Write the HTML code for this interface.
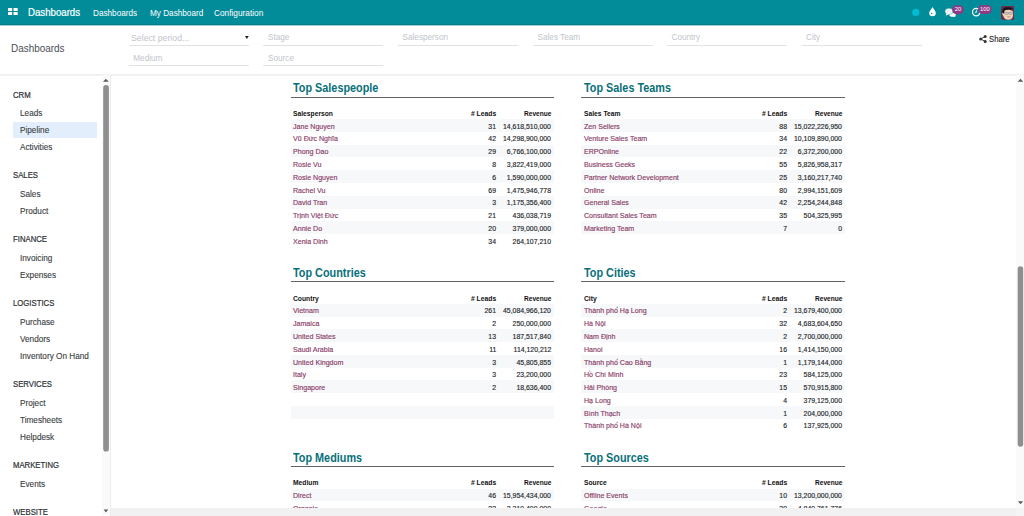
<!DOCTYPE html>
<html><head><meta charset="utf-8"><title>Dashboards</title>
<style>
html,body{margin:0;padding:0;}
body{width:1024px;height:516px;overflow:hidden;position:relative;background:#fff;font-family:"Liberation Sans",sans-serif;}
.t{position:absolute;white-space:nowrap;line-height:1;}
.r{position:absolute;}
.badge{position:absolute;height:9px;border-radius:4.5px;background:#8f3a86;color:#fff;font-size:6.4px;line-height:8.6px;text-align:center;font-family:"Liberation Sans",sans-serif;}
</style></head><body>
<div class="r" style="left:0.00px;top:0.00px;width:1024.00px;height:24.00px;background:#028b99;"></div>
<div class="r" style="left:0.00px;top:24.00px;width:1024.00px;height:1.00px;background:#037d88;"></div>
<div class="r" style="left:0.00px;top:25.00px;width:1024.00px;height:1.00px;background:#9fd0d5;"></div>
<svg class="r" style="left:0;top:0" width="24" height="24" viewBox="0 0 24 24"><g fill="#fff"><rect x="8" y="8" width="4.2" height="3.1" rx="0.5"/><rect x="13.5" y="8" width="4.2" height="3.1" rx="0.5"/><rect x="8" y="12" width="4.2" height="3.1" rx="0.5"/><rect x="13.5" y="12" width="4.2" height="3.1" rx="0.5"/></g></svg>
<div class="t " style="left:28.10px;top:8.00px;font-size:10.00px;color:#fff;font-weight:normal;transform:scaleX(0.965);transform-origin:left center;-webkit-text-stroke:0.2px #fff;">Dashboards</div>
<div class="t " style="left:93.40px;top:9.00px;font-size:9.00px;color:#fff;font-weight:normal;transform:scaleX(0.910);transform-origin:left center;">Dashboards</div>
<div class="t " style="left:149.50px;top:9.00px;font-size:9.00px;color:#fff;font-weight:normal;transform:scaleX(0.910);transform-origin:left center;">My Dashboard</div>
<div class="t " style="left:214.20px;top:9.00px;font-size:9.00px;color:#fff;font-weight:normal;transform:scaleX(0.920);transform-origin:left center;">Configuration</div>
<svg class="r" style="left:900px;top:0" width="40" height="24" viewBox="900 0 40 24"><circle cx="915.8" cy="12.4" r="3.6" fill="#00bcd2"/><path d="M932.5 7 C933.4 9 935.8 11.2 935.8 12.9 A3.3 3.3 0 0 1 929.2 12.9 C929.2 11.2 931.6 9 932.5 7Z" fill="#fff"/><circle cx="931.7" cy="13.6" r="0.75" fill="#028b99"/></svg>
<svg class="r" style="left:940px;top:0" width="56" height="24" viewBox="940 0 56 24">
<ellipse cx="952.6" cy="14.7" rx="3.2" ry="2" fill="#fff"/><path d="M954.2 15.8 L955.9 16.9 L952.6 16.4Z" fill="#fff"/>
<ellipse cx="949" cy="11.4" rx="4" ry="3.1" fill="#fff" stroke="#028b99" stroke-width="0.4"/><path d="M946.4 13.6 L945.9 15.7 L948.6 14.3Z" fill="#fff"/>
<ellipse cx="949" cy="11.4" rx="2.8" ry="1.9" fill="#e6f2f3"/>
<rect x="952.2" y="5.2" width="11.5" height="9" rx="4.5" fill="#8d3a87"/>
<text x="957.95" y="11.1" font-size="5.8" text-anchor="middle" fill="#fff" font-family="Liberation Sans">20</text>
<circle cx="976.2" cy="12.1" r="3.7" fill="none" stroke="#fff" stroke-width="1.2"/><path d="M976.4 9.8 V12.4 H974.9" fill="none" stroke="#fff" stroke-width="0.8"/>
<rect x="978.1" y="5" width="13.6" height="9" rx="4.5" fill="#8d3a87"/>
<text x="984.9" y="10.9" font-size="5.8" text-anchor="middle" fill="#fff" font-family="Liberation Sans">100</text>
</svg>
<svg class="r" style="left:1000.6px;top:5.9px" width="13.6" height="13.8" viewBox="0 0 13.6 13.8"><rect x="0" y="0" width="13.6" height="13.8" rx="2" fill="#6a2b4e"/><path d="M2 6 C2 2.8 12.2 2.8 12.2 6.5 L12 10 C11.5 12.8 9.5 13.8 7.4 13.8 C5 13.8 3 12.6 2.4 10.2 L1.4 8.6 C1 7.6 1.4 6.6 2 6.6Z" fill="#f4d2b6"/><path d="M1.6 7 C1 3.6 2.6 1.2 6 1.3 C9 1.2 11.6 1.8 12 2.6 C11.4 3.4 10.4 3.6 9 3.6 C7 3.6 5 3.8 3.6 4.6 L3 7.6Z" fill="#151515"/><rect x="3.6" y="6.3" width="3.8" height="2" rx="0.7" fill="#cfcfcf" stroke="#777" stroke-width="0.5"/><rect x="8" y="6.3" width="3.6" height="2" rx="0.7" fill="#cfcfcf" stroke="#777" stroke-width="0.5"/><path d="M6.4 10.6 Q8 11.4 9.4 10.6" stroke="#b07070" stroke-width="0.7" fill="none"/></svg>
<div class="r" style="left:0.00px;top:74.00px;width:1024.00px;height:2.00px;background:#f0f1f3;"></div>
<div class="t " style="left:11.40px;top:43.80px;font-size:10.40px;color:#4a4f54;font-weight:normal;transform:scaleX(0.955);transform-origin:left center;">Dashboards</div>
<div class="r" style="left:128.50px;top:45.00px;width:120.10px;height:1.30px;background:#e2e2e2;"></div>
<div class="t " style="left:130.90px;top:33.85px;font-size:9.30px;color:#bfc5cc;font-weight:normal;transform:scaleX(0.940);transform-origin:left center;">Select period...</div>
<svg class="r" style="left:240px;top:30px" width="12" height="12" viewBox="240 30 12 12"><path d="M244.9 36.1 L248.8 36.1 L246.85 38.9Z" fill="#222"/></svg>
<div class="r" style="left:128.50px;top:65.10px;width:120.10px;height:1.30px;background:#e2e2e2;"></div>
<div class="t " style="left:133.30px;top:54.90px;font-size:8.20px;color:#bfc5cc;font-weight:normal;">Medium</div>
<div class="r" style="left:263.30px;top:44.50px;width:119.80px;height:1.30px;background:#e2e2e2;"></div>
<div class="t " style="left:268.00px;top:33.90px;font-size:8.20px;color:#bfc5cc;font-weight:normal;">Stage</div>
<div class="r" style="left:263.30px;top:64.80px;width:119.80px;height:1.30px;background:#e2e2e2;"></div>
<div class="t " style="left:268.00px;top:54.90px;font-size:8.20px;color:#bfc5cc;font-weight:normal;">Source</div>
<div class="r" style="left:398.00px;top:44.50px;width:120.00px;height:1.30px;background:#e2e2e2;"></div>
<div class="t " style="left:402.50px;top:33.90px;font-size:8.20px;color:#bfc5cc;font-weight:normal;">Salesperson</div>
<div class="r" style="left:533.00px;top:44.50px;width:120.00px;height:1.30px;background:#e2e2e2;"></div>
<div class="t " style="left:537.50px;top:33.90px;font-size:8.20px;color:#bfc5cc;font-weight:normal;">Sales Team</div>
<div class="r" style="left:667.00px;top:44.50px;width:120.00px;height:1.30px;background:#e2e2e2;"></div>
<div class="t " style="left:671.50px;top:33.90px;font-size:8.20px;color:#bfc5cc;font-weight:normal;">Country</div>
<div class="r" style="left:801.60px;top:44.50px;width:120.00px;height:1.30px;background:#e2e2e2;"></div>
<div class="t " style="left:806.00px;top:33.90px;font-size:8.20px;color:#bfc5cc;font-weight:normal;">City</div>
<svg class="r" style="left:978.6px;top:35px" width="8" height="8" viewBox="0 0 8 8"><circle cx="6.2" cy="1.6" r="1.5" fill="#333"/><circle cx="1.7" cy="4" r="1.5" fill="#333"/><circle cx="6.2" cy="6.4" r="1.5" fill="#333"/><path d="M6.2 1.6 L1.7 4 L6.2 6.4" stroke="#333" stroke-width="0.9" fill="none"/></svg>
<div class="t " style="left:988.80px;top:35.30px;font-size:8.40px;color:#2a2a2a;font-weight:normal;transform:scaleX(0.920);transform-origin:left center;-webkit-text-stroke:0.15px currentColor;">Share</div>
<div class="r" style="left:13.20px;top:121.90px;width:84.20px;height:16.50px;background:#e3eefc;"></div>
<div class="t " style="left:13.20px;top:91.00px;font-size:9.00px;color:#2f3337;font-weight:normal;transform:scaleX(0.860);transform-origin:left center;-webkit-text-stroke:0.22px currentColor;">CRM</div>
<div class="t " style="left:20.20px;top:109.20px;font-size:8.60px;color:#3a3e42;font-weight:normal;transform:scaleX(0.955);transform-origin:left center;-webkit-text-stroke:0.12px currentColor;">Leads</div>
<div class="t " style="left:20.20px;top:126.20px;font-size:8.60px;color:#3a3e42;font-weight:normal;transform:scaleX(0.955);transform-origin:left center;-webkit-text-stroke:0.12px currentColor;">Pipeline</div>
<div class="t " style="left:20.20px;top:143.20px;font-size:8.60px;color:#3a3e42;font-weight:normal;transform:scaleX(0.955);transform-origin:left center;-webkit-text-stroke:0.12px currentColor;">Activities</div>
<div class="t " style="left:13.20px;top:171.00px;font-size:9.00px;color:#2f3337;font-weight:normal;transform:scaleX(0.860);transform-origin:left center;-webkit-text-stroke:0.22px currentColor;">SALES</div>
<div class="t " style="left:20.20px;top:190.20px;font-size:8.60px;color:#3a3e42;font-weight:normal;transform:scaleX(0.955);transform-origin:left center;-webkit-text-stroke:0.12px currentColor;">Sales</div>
<div class="t " style="left:20.20px;top:207.20px;font-size:8.60px;color:#3a3e42;font-weight:normal;transform:scaleX(0.955);transform-origin:left center;-webkit-text-stroke:0.12px currentColor;">Product</div>
<div class="t " style="left:13.20px;top:235.00px;font-size:9.00px;color:#2f3337;font-weight:normal;transform:scaleX(0.860);transform-origin:left center;-webkit-text-stroke:0.22px currentColor;">FINANCE</div>
<div class="t " style="left:20.20px;top:254.20px;font-size:8.60px;color:#3a3e42;font-weight:normal;transform:scaleX(0.955);transform-origin:left center;-webkit-text-stroke:0.12px currentColor;">Invoicing</div>
<div class="t " style="left:20.20px;top:271.20px;font-size:8.60px;color:#3a3e42;font-weight:normal;transform:scaleX(0.955);transform-origin:left center;-webkit-text-stroke:0.12px currentColor;">Expenses</div>
<div class="t " style="left:13.20px;top:299.00px;font-size:9.00px;color:#2f3337;font-weight:normal;transform:scaleX(0.860);transform-origin:left center;-webkit-text-stroke:0.22px currentColor;">LOGISTICS</div>
<div class="t " style="left:20.20px;top:318.20px;font-size:8.60px;color:#3a3e42;font-weight:normal;transform:scaleX(0.955);transform-origin:left center;-webkit-text-stroke:0.12px currentColor;">Purchase</div>
<div class="t " style="left:20.20px;top:335.20px;font-size:8.60px;color:#3a3e42;font-weight:normal;transform:scaleX(0.955);transform-origin:left center;-webkit-text-stroke:0.12px currentColor;">Vendors</div>
<div class="t " style="left:20.20px;top:352.20px;font-size:8.60px;color:#3a3e42;font-weight:normal;transform:scaleX(0.955);transform-origin:left center;-webkit-text-stroke:0.12px currentColor;">Inventory On Hand</div>
<div class="t " style="left:13.20px;top:380.00px;font-size:9.00px;color:#2f3337;font-weight:normal;transform:scaleX(0.860);transform-origin:left center;-webkit-text-stroke:0.22px currentColor;">SERVICES</div>
<div class="t " style="left:20.20px;top:399.20px;font-size:8.60px;color:#3a3e42;font-weight:normal;transform:scaleX(0.955);transform-origin:left center;-webkit-text-stroke:0.12px currentColor;">Project</div>
<div class="t " style="left:20.20px;top:416.20px;font-size:8.60px;color:#3a3e42;font-weight:normal;transform:scaleX(0.955);transform-origin:left center;-webkit-text-stroke:0.12px currentColor;">Timesheets</div>
<div class="t " style="left:20.20px;top:433.20px;font-size:8.60px;color:#3a3e42;font-weight:normal;transform:scaleX(0.955);transform-origin:left center;-webkit-text-stroke:0.12px currentColor;">Helpdesk</div>
<div class="t " style="left:13.20px;top:461.00px;font-size:9.00px;color:#2f3337;font-weight:normal;transform:scaleX(0.860);transform-origin:left center;-webkit-text-stroke:0.22px currentColor;">MARKETING</div>
<div class="t " style="left:20.20px;top:480.20px;font-size:8.60px;color:#3a3e42;font-weight:normal;transform:scaleX(0.955);transform-origin:left center;-webkit-text-stroke:0.12px currentColor;">Events</div>
<div class="t " style="left:13.20px;top:508.00px;font-size:9.00px;color:#2f3337;font-weight:normal;transform:scaleX(0.860);transform-origin:left center;-webkit-text-stroke:0.22px currentColor;">WEBSITE</div>
<div class="r" style="left:102.00px;top:75.00px;width:8.00px;height:441.00px;background:#fafafa;"></div>
<div class="r" style="left:110.00px;top:75.00px;width:1.00px;height:441.00px;background:#ebecee;"></div>
<svg class="r" style="left:100px;top:75px" width="12" height="441" viewBox="100 75 12 441"><rect x="103.2" y="85.1" width="5.7" height="366.5" rx="2.85" fill="#8f8f8f"/><path d="M103 81.7 L108.8 81.7 L105.9 78.7Z" fill="#5a5a5a"/><path d="M103.6 509.6 L108.3 509.6 L105.95 512.4Z" fill="#5a5a5a"/></svg>
<div class="r" style="left:1016.00px;top:75.00px;width:8.00px;height:433.00px;background:#fafafa;"></div>
<svg class="r" style="left:1012px;top:75px" width="12" height="441" viewBox="1012 75 12 441"><rect x="1017.7" y="266.2" width="5.5" height="180.5" rx="2.75" fill="#8f8f8f"/><path d="M1017.7 81.8 L1023.2 81.8 L1020.45 78.7Z" fill="#5a5a5a"/><path d="M1017.9 501.3 L1023.1 501.3 L1020.5 504.3Z" fill="#5a5a5a"/></svg>
<div class="r" style="left:111.00px;top:508.00px;width:905.00px;height:8.00px;background:#f1f1f1;"></div>
<div class="r" style="left:1016.00px;top:508.00px;width:8.00px;height:8.00px;background:#f4f4f4;"></div>
<div class="t " style="left:293.00px;top:82.40px;font-size:12.20px;color:#08707a;font-weight:bold;transform:scaleX(0.890);transform-origin:left center;">Top Salespeople</div>
<div class="r" style="left:291.00px;top:96.50px;width:262.80px;height:1.30px;background:#5f6266;"></div>
<div class="t " style="left:293.00px;top:110.35px;font-size:7.30px;color:#111;font-weight:bold;transform:scaleX(0.920);transform-origin:left center;">Salesperson</div>
<div class="t " style="right:528.00px;top:110.35px;font-size:7.30px;color:#111;font-weight:bold;transform:scaleX(0.930);transform-origin:right center;"># Leads</div>
<div class="t " style="right:472.70px;top:110.35px;font-size:7.30px;color:#111;font-weight:bold;transform:scaleX(0.900);transform-origin:right center;">Revenue</div>
<div class="r" style="left:291.00px;top:119.10px;width:262.80px;height:12.78px;background:#f7f8f9;"></div>
<div class="t " style="left:293.00px;top:123.40px;font-size:7.20px;color:#8a3c68;font-weight:normal;transform:scaleX(0.985);transform-origin:left center;-webkit-text-stroke:0.15px currentColor;">Jane Nguyen</div>
<div class="t " style="right:528.00px;top:123.40px;font-size:7.20px;color:#212529;font-weight:normal;transform:scaleX(0.960);transform-origin:right center;-webkit-text-stroke:0.15px currentColor;">31</div>
<div class="t " style="right:472.70px;top:123.40px;font-size:7.20px;color:#212529;font-weight:normal;transform:scaleX(0.960);transform-origin:right center;-webkit-text-stroke:0.15px currentColor;">14,618,510,000</div>
<div class="t " style="left:293.00px;top:135.40px;font-size:7.20px;color:#8a3c68;font-weight:normal;transform:scaleX(0.985);transform-origin:left center;-webkit-text-stroke:0.15px currentColor;">Vũ Đức Nghĩa</div>
<div class="t " style="right:528.00px;top:135.40px;font-size:7.20px;color:#212529;font-weight:normal;transform:scaleX(0.960);transform-origin:right center;-webkit-text-stroke:0.15px currentColor;">42</div>
<div class="t " style="right:472.70px;top:135.40px;font-size:7.20px;color:#212529;font-weight:normal;transform:scaleX(0.960);transform-origin:right center;-webkit-text-stroke:0.15px currentColor;">14,298,900,000</div>
<div class="r" style="left:291.00px;top:144.66px;width:262.80px;height:12.78px;background:#f7f8f9;"></div>
<div class="t " style="left:293.00px;top:148.40px;font-size:7.20px;color:#8a3c68;font-weight:normal;transform:scaleX(0.985);transform-origin:left center;-webkit-text-stroke:0.15px currentColor;">Phong Dao</div>
<div class="t " style="right:528.00px;top:148.40px;font-size:7.20px;color:#212529;font-weight:normal;transform:scaleX(0.960);transform-origin:right center;-webkit-text-stroke:0.15px currentColor;">29</div>
<div class="t " style="right:472.70px;top:148.40px;font-size:7.20px;color:#212529;font-weight:normal;transform:scaleX(0.960);transform-origin:right center;-webkit-text-stroke:0.15px currentColor;">6,766,100,000</div>
<div class="t " style="left:293.00px;top:161.40px;font-size:7.20px;color:#8a3c68;font-weight:normal;transform:scaleX(0.985);transform-origin:left center;-webkit-text-stroke:0.15px currentColor;">Rosie Vu</div>
<div class="t " style="right:528.00px;top:161.40px;font-size:7.20px;color:#212529;font-weight:normal;transform:scaleX(0.960);transform-origin:right center;-webkit-text-stroke:0.15px currentColor;">8</div>
<div class="t " style="right:472.70px;top:161.40px;font-size:7.20px;color:#212529;font-weight:normal;transform:scaleX(0.960);transform-origin:right center;-webkit-text-stroke:0.15px currentColor;">3,822,419,000</div>
<div class="r" style="left:291.00px;top:170.22px;width:262.80px;height:12.78px;background:#f7f8f9;"></div>
<div class="t " style="left:293.00px;top:174.40px;font-size:7.20px;color:#8a3c68;font-weight:normal;transform:scaleX(0.985);transform-origin:left center;-webkit-text-stroke:0.15px currentColor;">Rosie Nguyen</div>
<div class="t " style="right:528.00px;top:174.40px;font-size:7.20px;color:#212529;font-weight:normal;transform:scaleX(0.960);transform-origin:right center;-webkit-text-stroke:0.15px currentColor;">6</div>
<div class="t " style="right:472.70px;top:174.40px;font-size:7.20px;color:#212529;font-weight:normal;transform:scaleX(0.960);transform-origin:right center;-webkit-text-stroke:0.15px currentColor;">1,590,000,000</div>
<div class="t " style="left:293.00px;top:187.40px;font-size:7.20px;color:#8a3c68;font-weight:normal;transform:scaleX(0.985);transform-origin:left center;-webkit-text-stroke:0.15px currentColor;">Rachel Vu</div>
<div class="t " style="right:528.00px;top:187.40px;font-size:7.20px;color:#212529;font-weight:normal;transform:scaleX(0.960);transform-origin:right center;-webkit-text-stroke:0.15px currentColor;">69</div>
<div class="t " style="right:472.70px;top:187.40px;font-size:7.20px;color:#212529;font-weight:normal;transform:scaleX(0.960);transform-origin:right center;-webkit-text-stroke:0.15px currentColor;">1,475,946,778</div>
<div class="r" style="left:291.00px;top:195.78px;width:262.80px;height:12.78px;background:#f7f8f9;"></div>
<div class="t " style="left:293.00px;top:199.40px;font-size:7.20px;color:#8a3c68;font-weight:normal;transform:scaleX(0.985);transform-origin:left center;-webkit-text-stroke:0.15px currentColor;">David Tran</div>
<div class="t " style="right:528.00px;top:199.40px;font-size:7.20px;color:#212529;font-weight:normal;transform:scaleX(0.960);transform-origin:right center;-webkit-text-stroke:0.15px currentColor;">3</div>
<div class="t " style="right:472.70px;top:199.40px;font-size:7.20px;color:#212529;font-weight:normal;transform:scaleX(0.960);transform-origin:right center;-webkit-text-stroke:0.15px currentColor;">1,175,356,400</div>
<div class="t " style="left:293.00px;top:212.40px;font-size:7.20px;color:#8a3c68;font-weight:normal;transform:scaleX(0.985);transform-origin:left center;-webkit-text-stroke:0.15px currentColor;">Trịnh Việt Đức</div>
<div class="t " style="right:528.00px;top:212.40px;font-size:7.20px;color:#212529;font-weight:normal;transform:scaleX(0.960);transform-origin:right center;-webkit-text-stroke:0.15px currentColor;">21</div>
<div class="t " style="right:472.70px;top:212.40px;font-size:7.20px;color:#212529;font-weight:normal;transform:scaleX(0.960);transform-origin:right center;-webkit-text-stroke:0.15px currentColor;">436,038,719</div>
<div class="r" style="left:291.00px;top:221.34px;width:262.80px;height:12.78px;background:#f7f8f9;"></div>
<div class="t " style="left:293.00px;top:225.40px;font-size:7.20px;color:#8a3c68;font-weight:normal;transform:scaleX(0.985);transform-origin:left center;-webkit-text-stroke:0.15px currentColor;">Annie Do</div>
<div class="t " style="right:528.00px;top:225.40px;font-size:7.20px;color:#212529;font-weight:normal;transform:scaleX(0.960);transform-origin:right center;-webkit-text-stroke:0.15px currentColor;">20</div>
<div class="t " style="right:472.70px;top:225.40px;font-size:7.20px;color:#212529;font-weight:normal;transform:scaleX(0.960);transform-origin:right center;-webkit-text-stroke:0.15px currentColor;">379,000,000</div>
<div class="t " style="left:293.00px;top:238.40px;font-size:7.20px;color:#8a3c68;font-weight:normal;transform:scaleX(0.985);transform-origin:left center;-webkit-text-stroke:0.15px currentColor;">Xenia Dinh</div>
<div class="t " style="right:528.00px;top:238.40px;font-size:7.20px;color:#212529;font-weight:normal;transform:scaleX(0.960);transform-origin:right center;-webkit-text-stroke:0.15px currentColor;">34</div>
<div class="t " style="right:472.70px;top:238.40px;font-size:7.20px;color:#212529;font-weight:normal;transform:scaleX(0.960);transform-origin:right center;-webkit-text-stroke:0.15px currentColor;">264,107,210</div>
<div class="t " style="left:583.50px;top:82.40px;font-size:12.20px;color:#08707a;font-weight:bold;transform:scaleX(0.890);transform-origin:left center;">Top Sales Teams</div>
<div class="r" style="left:581.20px;top:96.50px;width:263.80px;height:1.30px;background:#5f6266;"></div>
<div class="t " style="left:583.50px;top:110.35px;font-size:7.30px;color:#111;font-weight:bold;transform:scaleX(0.920);transform-origin:left center;">Sales Team</div>
<div class="t " style="right:236.80px;top:110.35px;font-size:7.30px;color:#111;font-weight:bold;transform:scaleX(0.930);transform-origin:right center;"># Leads</div>
<div class="t " style="right:181.80px;top:110.35px;font-size:7.30px;color:#111;font-weight:bold;transform:scaleX(0.900);transform-origin:right center;">Revenue</div>
<div class="r" style="left:581.20px;top:119.10px;width:263.80px;height:12.78px;background:#f7f8f9;"></div>
<div class="t " style="left:583.50px;top:123.40px;font-size:7.20px;color:#8a3c68;font-weight:normal;transform:scaleX(0.985);transform-origin:left center;-webkit-text-stroke:0.15px currentColor;">Zen Sellers</div>
<div class="t " style="right:236.80px;top:123.40px;font-size:7.20px;color:#212529;font-weight:normal;transform:scaleX(0.960);transform-origin:right center;-webkit-text-stroke:0.15px currentColor;">88</div>
<div class="t " style="right:181.80px;top:123.40px;font-size:7.20px;color:#212529;font-weight:normal;transform:scaleX(0.960);transform-origin:right center;-webkit-text-stroke:0.15px currentColor;">15,022,226,950</div>
<div class="t " style="left:583.50px;top:135.40px;font-size:7.20px;color:#8a3c68;font-weight:normal;transform:scaleX(0.985);transform-origin:left center;-webkit-text-stroke:0.15px currentColor;">Venture Sales Team</div>
<div class="t " style="right:236.80px;top:135.40px;font-size:7.20px;color:#212529;font-weight:normal;transform:scaleX(0.960);transform-origin:right center;-webkit-text-stroke:0.15px currentColor;">34</div>
<div class="t " style="right:181.80px;top:135.40px;font-size:7.20px;color:#212529;font-weight:normal;transform:scaleX(0.960);transform-origin:right center;-webkit-text-stroke:0.15px currentColor;">10,109,890,000</div>
<div class="r" style="left:581.20px;top:144.66px;width:263.80px;height:12.78px;background:#f7f8f9;"></div>
<div class="t " style="left:583.50px;top:148.40px;font-size:7.20px;color:#8a3c68;font-weight:normal;transform:scaleX(0.985);transform-origin:left center;-webkit-text-stroke:0.15px currentColor;">ERPOnline</div>
<div class="t " style="right:236.80px;top:148.40px;font-size:7.20px;color:#212529;font-weight:normal;transform:scaleX(0.960);transform-origin:right center;-webkit-text-stroke:0.15px currentColor;">22</div>
<div class="t " style="right:181.80px;top:148.40px;font-size:7.20px;color:#212529;font-weight:normal;transform:scaleX(0.960);transform-origin:right center;-webkit-text-stroke:0.15px currentColor;">6,372,200,000</div>
<div class="t " style="left:583.50px;top:161.40px;font-size:7.20px;color:#8a3c68;font-weight:normal;transform:scaleX(0.985);transform-origin:left center;-webkit-text-stroke:0.15px currentColor;">Business Geeks</div>
<div class="t " style="right:236.80px;top:161.40px;font-size:7.20px;color:#212529;font-weight:normal;transform:scaleX(0.960);transform-origin:right center;-webkit-text-stroke:0.15px currentColor;">55</div>
<div class="t " style="right:181.80px;top:161.40px;font-size:7.20px;color:#212529;font-weight:normal;transform:scaleX(0.960);transform-origin:right center;-webkit-text-stroke:0.15px currentColor;">5,826,958,317</div>
<div class="r" style="left:581.20px;top:170.22px;width:263.80px;height:12.78px;background:#f7f8f9;"></div>
<div class="t " style="left:583.50px;top:174.40px;font-size:7.20px;color:#8a3c68;font-weight:normal;transform:scaleX(0.985);transform-origin:left center;-webkit-text-stroke:0.15px currentColor;">Partner Network Development</div>
<div class="t " style="right:236.80px;top:174.40px;font-size:7.20px;color:#212529;font-weight:normal;transform:scaleX(0.960);transform-origin:right center;-webkit-text-stroke:0.15px currentColor;">25</div>
<div class="t " style="right:181.80px;top:174.40px;font-size:7.20px;color:#212529;font-weight:normal;transform:scaleX(0.960);transform-origin:right center;-webkit-text-stroke:0.15px currentColor;">3,160,217,740</div>
<div class="t " style="left:583.50px;top:187.40px;font-size:7.20px;color:#8a3c68;font-weight:normal;transform:scaleX(0.985);transform-origin:left center;-webkit-text-stroke:0.15px currentColor;">Online</div>
<div class="t " style="right:236.80px;top:187.40px;font-size:7.20px;color:#212529;font-weight:normal;transform:scaleX(0.960);transform-origin:right center;-webkit-text-stroke:0.15px currentColor;">80</div>
<div class="t " style="right:181.80px;top:187.40px;font-size:7.20px;color:#212529;font-weight:normal;transform:scaleX(0.960);transform-origin:right center;-webkit-text-stroke:0.15px currentColor;">2,994,151,609</div>
<div class="r" style="left:581.20px;top:195.78px;width:263.80px;height:12.78px;background:#f7f8f9;"></div>
<div class="t " style="left:583.50px;top:199.40px;font-size:7.20px;color:#8a3c68;font-weight:normal;transform:scaleX(0.985);transform-origin:left center;-webkit-text-stroke:0.15px currentColor;">General Sales</div>
<div class="t " style="right:236.80px;top:199.40px;font-size:7.20px;color:#212529;font-weight:normal;transform:scaleX(0.960);transform-origin:right center;-webkit-text-stroke:0.15px currentColor;">42</div>
<div class="t " style="right:181.80px;top:199.40px;font-size:7.20px;color:#212529;font-weight:normal;transform:scaleX(0.960);transform-origin:right center;-webkit-text-stroke:0.15px currentColor;">2,254,244,848</div>
<div class="t " style="left:583.50px;top:212.40px;font-size:7.20px;color:#8a3c68;font-weight:normal;transform:scaleX(0.985);transform-origin:left center;-webkit-text-stroke:0.15px currentColor;">Consultant Sales Team</div>
<div class="t " style="right:236.80px;top:212.40px;font-size:7.20px;color:#212529;font-weight:normal;transform:scaleX(0.960);transform-origin:right center;-webkit-text-stroke:0.15px currentColor;">35</div>
<div class="t " style="right:181.80px;top:212.40px;font-size:7.20px;color:#212529;font-weight:normal;transform:scaleX(0.960);transform-origin:right center;-webkit-text-stroke:0.15px currentColor;">504,325,995</div>
<div class="r" style="left:581.20px;top:221.34px;width:263.80px;height:12.78px;background:#f7f8f9;"></div>
<div class="t " style="left:583.50px;top:225.40px;font-size:7.20px;color:#8a3c68;font-weight:normal;transform:scaleX(0.985);transform-origin:left center;-webkit-text-stroke:0.15px currentColor;">Marketing Team</div>
<div class="t " style="right:236.80px;top:225.40px;font-size:7.20px;color:#212529;font-weight:normal;transform:scaleX(0.960);transform-origin:right center;-webkit-text-stroke:0.15px currentColor;">7</div>
<div class="t " style="right:181.80px;top:225.40px;font-size:7.20px;color:#212529;font-weight:normal;transform:scaleX(0.960);transform-origin:right center;-webkit-text-stroke:0.15px currentColor;">0</div>
<div class="t " style="left:293.00px;top:267.40px;font-size:12.20px;color:#08707a;font-weight:bold;transform:scaleX(0.890);transform-origin:left center;">Top Countries</div>
<div class="r" style="left:291.00px;top:281.20px;width:262.80px;height:1.30px;background:#5f6266;"></div>
<div class="t " style="left:293.00px;top:295.35px;font-size:7.30px;color:#111;font-weight:bold;transform:scaleX(0.920);transform-origin:left center;">Country</div>
<div class="t " style="right:528.00px;top:295.35px;font-size:7.30px;color:#111;font-weight:bold;transform:scaleX(0.930);transform-origin:right center;"># Leads</div>
<div class="t " style="right:472.70px;top:295.35px;font-size:7.30px;color:#111;font-weight:bold;transform:scaleX(0.900);transform-origin:right center;">Revenue</div>
<div class="r" style="left:291.00px;top:303.80px;width:262.80px;height:12.78px;background:#f7f8f9;"></div>
<div class="t " style="left:293.00px;top:307.40px;font-size:7.20px;color:#8a3c68;font-weight:normal;transform:scaleX(0.985);transform-origin:left center;-webkit-text-stroke:0.15px currentColor;">Vietnam</div>
<div class="t " style="right:528.00px;top:307.40px;font-size:7.20px;color:#212529;font-weight:normal;transform:scaleX(0.960);transform-origin:right center;-webkit-text-stroke:0.15px currentColor;">261</div>
<div class="t " style="right:472.70px;top:307.40px;font-size:7.20px;color:#212529;font-weight:normal;transform:scaleX(0.960);transform-origin:right center;-webkit-text-stroke:0.15px currentColor;">45,084,966,120</div>
<div class="t " style="left:293.00px;top:320.40px;font-size:7.20px;color:#8a3c68;font-weight:normal;transform:scaleX(0.985);transform-origin:left center;-webkit-text-stroke:0.15px currentColor;">Jamaica</div>
<div class="t " style="right:528.00px;top:320.40px;font-size:7.20px;color:#212529;font-weight:normal;transform:scaleX(0.960);transform-origin:right center;-webkit-text-stroke:0.15px currentColor;">2</div>
<div class="t " style="right:472.70px;top:320.40px;font-size:7.20px;color:#212529;font-weight:normal;transform:scaleX(0.960);transform-origin:right center;-webkit-text-stroke:0.15px currentColor;">250,000,000</div>
<div class="r" style="left:291.00px;top:329.36px;width:262.80px;height:12.78px;background:#f7f8f9;"></div>
<div class="t " style="left:293.00px;top:333.40px;font-size:7.20px;color:#8a3c68;font-weight:normal;transform:scaleX(0.985);transform-origin:left center;-webkit-text-stroke:0.15px currentColor;">United States</div>
<div class="t " style="right:528.00px;top:333.40px;font-size:7.20px;color:#212529;font-weight:normal;transform:scaleX(0.960);transform-origin:right center;-webkit-text-stroke:0.15px currentColor;">13</div>
<div class="t " style="right:472.70px;top:333.40px;font-size:7.20px;color:#212529;font-weight:normal;transform:scaleX(0.960);transform-origin:right center;-webkit-text-stroke:0.15px currentColor;">187,517,840</div>
<div class="t " style="left:293.00px;top:346.40px;font-size:7.20px;color:#8a3c68;font-weight:normal;transform:scaleX(0.985);transform-origin:left center;-webkit-text-stroke:0.15px currentColor;">Saudi Arabia</div>
<div class="t " style="right:528.00px;top:346.40px;font-size:7.20px;color:#212529;font-weight:normal;transform:scaleX(0.960);transform-origin:right center;-webkit-text-stroke:0.15px currentColor;">11</div>
<div class="t " style="right:472.70px;top:346.40px;font-size:7.20px;color:#212529;font-weight:normal;transform:scaleX(0.960);transform-origin:right center;-webkit-text-stroke:0.15px currentColor;">114,120,212</div>
<div class="r" style="left:291.00px;top:354.92px;width:262.80px;height:12.78px;background:#f7f8f9;"></div>
<div class="t " style="left:293.00px;top:359.40px;font-size:7.20px;color:#8a3c68;font-weight:normal;transform:scaleX(0.985);transform-origin:left center;-webkit-text-stroke:0.15px currentColor;">United Kingdom</div>
<div class="t " style="right:528.00px;top:359.40px;font-size:7.20px;color:#212529;font-weight:normal;transform:scaleX(0.960);transform-origin:right center;-webkit-text-stroke:0.15px currentColor;">3</div>
<div class="t " style="right:472.70px;top:359.40px;font-size:7.20px;color:#212529;font-weight:normal;transform:scaleX(0.960);transform-origin:right center;-webkit-text-stroke:0.15px currentColor;">45,805,855</div>
<div class="t " style="left:293.00px;top:371.40px;font-size:7.20px;color:#8a3c68;font-weight:normal;transform:scaleX(0.985);transform-origin:left center;-webkit-text-stroke:0.15px currentColor;">Italy</div>
<div class="t " style="right:528.00px;top:371.40px;font-size:7.20px;color:#212529;font-weight:normal;transform:scaleX(0.960);transform-origin:right center;-webkit-text-stroke:0.15px currentColor;">3</div>
<div class="t " style="right:472.70px;top:371.40px;font-size:7.20px;color:#212529;font-weight:normal;transform:scaleX(0.960);transform-origin:right center;-webkit-text-stroke:0.15px currentColor;">23,200,000</div>
<div class="r" style="left:291.00px;top:380.48px;width:262.80px;height:12.78px;background:#f7f8f9;"></div>
<div class="t " style="left:293.00px;top:384.40px;font-size:7.20px;color:#8a3c68;font-weight:normal;transform:scaleX(0.985);transform-origin:left center;-webkit-text-stroke:0.15px currentColor;">Singapore</div>
<div class="t " style="right:528.00px;top:384.40px;font-size:7.20px;color:#212529;font-weight:normal;transform:scaleX(0.960);transform-origin:right center;-webkit-text-stroke:0.15px currentColor;">2</div>
<div class="t " style="right:472.70px;top:384.40px;font-size:7.20px;color:#212529;font-weight:normal;transform:scaleX(0.960);transform-origin:right center;-webkit-text-stroke:0.15px currentColor;">18,636,400</div>
<div class="r" style="left:291.00px;top:406.04px;width:262.80px;height:12.78px;background:#f7f8f9;"></div>
<div class="t " style="left:583.50px;top:267.40px;font-size:12.20px;color:#08707a;font-weight:bold;transform:scaleX(0.890);transform-origin:left center;">Top Cities</div>
<div class="r" style="left:581.20px;top:281.20px;width:263.80px;height:1.30px;background:#5f6266;"></div>
<div class="t " style="left:583.50px;top:295.35px;font-size:7.30px;color:#111;font-weight:bold;transform:scaleX(0.920);transform-origin:left center;">City</div>
<div class="t " style="right:236.80px;top:295.35px;font-size:7.30px;color:#111;font-weight:bold;transform:scaleX(0.930);transform-origin:right center;"># Leads</div>
<div class="t " style="right:181.80px;top:295.35px;font-size:7.30px;color:#111;font-weight:bold;transform:scaleX(0.900);transform-origin:right center;">Revenue</div>
<div class="r" style="left:581.20px;top:303.80px;width:263.80px;height:12.78px;background:#f7f8f9;"></div>
<div class="t " style="left:583.50px;top:307.40px;font-size:7.20px;color:#8a3c68;font-weight:normal;transform:scaleX(0.985);transform-origin:left center;-webkit-text-stroke:0.15px currentColor;">Thành phố Hạ Long</div>
<div class="t " style="right:236.80px;top:307.40px;font-size:7.20px;color:#212529;font-weight:normal;transform:scaleX(0.960);transform-origin:right center;-webkit-text-stroke:0.15px currentColor;">2</div>
<div class="t " style="right:181.80px;top:307.40px;font-size:7.20px;color:#212529;font-weight:normal;transform:scaleX(0.960);transform-origin:right center;-webkit-text-stroke:0.15px currentColor;">13,679,400,000</div>
<div class="t " style="left:583.50px;top:320.40px;font-size:7.20px;color:#8a3c68;font-weight:normal;transform:scaleX(0.985);transform-origin:left center;-webkit-text-stroke:0.15px currentColor;">Hà Nội</div>
<div class="t " style="right:236.80px;top:320.40px;font-size:7.20px;color:#212529;font-weight:normal;transform:scaleX(0.960);transform-origin:right center;-webkit-text-stroke:0.15px currentColor;">32</div>
<div class="t " style="right:181.80px;top:320.40px;font-size:7.20px;color:#212529;font-weight:normal;transform:scaleX(0.960);transform-origin:right center;-webkit-text-stroke:0.15px currentColor;">4,683,604,650</div>
<div class="r" style="left:581.20px;top:329.36px;width:263.80px;height:12.78px;background:#f7f8f9;"></div>
<div class="t " style="left:583.50px;top:333.40px;font-size:7.20px;color:#8a3c68;font-weight:normal;transform:scaleX(0.985);transform-origin:left center;-webkit-text-stroke:0.15px currentColor;">Nam Định</div>
<div class="t " style="right:236.80px;top:333.40px;font-size:7.20px;color:#212529;font-weight:normal;transform:scaleX(0.960);transform-origin:right center;-webkit-text-stroke:0.15px currentColor;">2</div>
<div class="t " style="right:181.80px;top:333.40px;font-size:7.20px;color:#212529;font-weight:normal;transform:scaleX(0.960);transform-origin:right center;-webkit-text-stroke:0.15px currentColor;">2,700,000,000</div>
<div class="t " style="left:583.50px;top:346.40px;font-size:7.20px;color:#8a3c68;font-weight:normal;transform:scaleX(0.985);transform-origin:left center;-webkit-text-stroke:0.15px currentColor;">Hanoi</div>
<div class="t " style="right:236.80px;top:346.40px;font-size:7.20px;color:#212529;font-weight:normal;transform:scaleX(0.960);transform-origin:right center;-webkit-text-stroke:0.15px currentColor;">16</div>
<div class="t " style="right:181.80px;top:346.40px;font-size:7.20px;color:#212529;font-weight:normal;transform:scaleX(0.960);transform-origin:right center;-webkit-text-stroke:0.15px currentColor;">1,414,150,000</div>
<div class="r" style="left:581.20px;top:354.92px;width:263.80px;height:12.78px;background:#f7f8f9;"></div>
<div class="t " style="left:583.50px;top:359.40px;font-size:7.20px;color:#8a3c68;font-weight:normal;transform:scaleX(0.985);transform-origin:left center;-webkit-text-stroke:0.15px currentColor;">Thành phố Cao Bằng</div>
<div class="t " style="right:236.80px;top:359.40px;font-size:7.20px;color:#212529;font-weight:normal;transform:scaleX(0.960);transform-origin:right center;-webkit-text-stroke:0.15px currentColor;">1</div>
<div class="t " style="right:181.80px;top:359.40px;font-size:7.20px;color:#212529;font-weight:normal;transform:scaleX(0.960);transform-origin:right center;-webkit-text-stroke:0.15px currentColor;">1,179,144,000</div>
<div class="t " style="left:583.50px;top:371.40px;font-size:7.20px;color:#8a3c68;font-weight:normal;transform:scaleX(0.985);transform-origin:left center;-webkit-text-stroke:0.15px currentColor;">Hồ Chí Minh</div>
<div class="t " style="right:236.80px;top:371.40px;font-size:7.20px;color:#212529;font-weight:normal;transform:scaleX(0.960);transform-origin:right center;-webkit-text-stroke:0.15px currentColor;">23</div>
<div class="t " style="right:181.80px;top:371.40px;font-size:7.20px;color:#212529;font-weight:normal;transform:scaleX(0.960);transform-origin:right center;-webkit-text-stroke:0.15px currentColor;">584,125,000</div>
<div class="r" style="left:581.20px;top:380.48px;width:263.80px;height:12.78px;background:#f7f8f9;"></div>
<div class="t " style="left:583.50px;top:384.40px;font-size:7.20px;color:#8a3c68;font-weight:normal;transform:scaleX(0.985);transform-origin:left center;-webkit-text-stroke:0.15px currentColor;">Hải Phòng</div>
<div class="t " style="right:236.80px;top:384.40px;font-size:7.20px;color:#212529;font-weight:normal;transform:scaleX(0.960);transform-origin:right center;-webkit-text-stroke:0.15px currentColor;">15</div>
<div class="t " style="right:181.80px;top:384.40px;font-size:7.20px;color:#212529;font-weight:normal;transform:scaleX(0.960);transform-origin:right center;-webkit-text-stroke:0.15px currentColor;">570,915,800</div>
<div class="t " style="left:583.50px;top:397.40px;font-size:7.20px;color:#8a3c68;font-weight:normal;transform:scaleX(0.985);transform-origin:left center;-webkit-text-stroke:0.15px currentColor;">Hạ Long</div>
<div class="t " style="right:236.80px;top:397.40px;font-size:7.20px;color:#212529;font-weight:normal;transform:scaleX(0.960);transform-origin:right center;-webkit-text-stroke:0.15px currentColor;">4</div>
<div class="t " style="right:181.80px;top:397.40px;font-size:7.20px;color:#212529;font-weight:normal;transform:scaleX(0.960);transform-origin:right center;-webkit-text-stroke:0.15px currentColor;">379,125,000</div>
<div class="r" style="left:581.20px;top:406.04px;width:263.80px;height:12.78px;background:#f7f8f9;"></div>
<div class="t " style="left:583.50px;top:410.40px;font-size:7.20px;color:#8a3c68;font-weight:normal;transform:scaleX(0.985);transform-origin:left center;-webkit-text-stroke:0.15px currentColor;">Bình Thạch</div>
<div class="t " style="right:236.80px;top:410.40px;font-size:7.20px;color:#212529;font-weight:normal;transform:scaleX(0.960);transform-origin:right center;-webkit-text-stroke:0.15px currentColor;">1</div>
<div class="t " style="right:181.80px;top:410.40px;font-size:7.20px;color:#212529;font-weight:normal;transform:scaleX(0.960);transform-origin:right center;-webkit-text-stroke:0.15px currentColor;">204,000,000</div>
<div class="t " style="left:583.50px;top:422.40px;font-size:7.20px;color:#8a3c68;font-weight:normal;transform:scaleX(0.985);transform-origin:left center;-webkit-text-stroke:0.15px currentColor;">Thành phố Hà Nội</div>
<div class="t " style="right:236.80px;top:422.40px;font-size:7.20px;color:#212529;font-weight:normal;transform:scaleX(0.960);transform-origin:right center;-webkit-text-stroke:0.15px currentColor;">6</div>
<div class="t " style="right:181.80px;top:422.40px;font-size:7.20px;color:#212529;font-weight:normal;transform:scaleX(0.960);transform-origin:right center;-webkit-text-stroke:0.15px currentColor;">137,925,000</div>
<div class="t " style="left:293.00px;top:452.40px;font-size:12.20px;color:#08707a;font-weight:bold;transform:scaleX(0.890);transform-origin:left center;">Top Mediums</div>
<div class="r" style="left:291.00px;top:465.90px;width:262.80px;height:1.30px;background:#5f6266;"></div>
<div class="t " style="left:293.00px;top:479.35px;font-size:7.30px;color:#111;font-weight:bold;transform:scaleX(0.920);transform-origin:left center;">Medium</div>
<div class="t " style="right:528.00px;top:479.35px;font-size:7.30px;color:#111;font-weight:bold;transform:scaleX(0.930);transform-origin:right center;"># Leads</div>
<div class="t " style="right:472.70px;top:479.35px;font-size:7.30px;color:#111;font-weight:bold;transform:scaleX(0.900);transform-origin:right center;">Revenue</div>
<div class="r" style="left:291.00px;top:488.50px;width:262.80px;height:12.78px;background:#f7f8f9;"></div>
<div class="t " style="left:293.00px;top:492.40px;font-size:7.20px;color:#8a3c68;font-weight:normal;transform:scaleX(0.985);transform-origin:left center;-webkit-text-stroke:0.15px currentColor;">Direct</div>
<div class="t " style="right:528.00px;top:492.40px;font-size:7.20px;color:#212529;font-weight:normal;transform:scaleX(0.960);transform-origin:right center;-webkit-text-stroke:0.15px currentColor;">46</div>
<div class="t " style="right:472.70px;top:492.40px;font-size:7.20px;color:#212529;font-weight:normal;transform:scaleX(0.960);transform-origin:right center;-webkit-text-stroke:0.15px currentColor;">15,954,434,000</div>
<div class="t " style="left:293.00px;top:505.40px;font-size:7.20px;color:#8a3c68;font-weight:normal;transform:scaleX(0.985);transform-origin:left center;-webkit-text-stroke:0.15px currentColor;">Organic</div>
<div class="t " style="right:528.00px;top:505.40px;font-size:7.20px;color:#212529;font-weight:normal;transform:scaleX(0.960);transform-origin:right center;-webkit-text-stroke:0.15px currentColor;">23</div>
<div class="t " style="right:472.70px;top:505.40px;font-size:7.20px;color:#212529;font-weight:normal;transform:scaleX(0.960);transform-origin:right center;-webkit-text-stroke:0.15px currentColor;">3,310,400,000</div>
<div class="r" style="left:291.00px;top:514.06px;width:262.80px;height:12.78px;background:#f7f8f9;"></div>
<div class="r" style="left:291.00px;top:539.62px;width:262.80px;height:12.78px;background:#f7f8f9;"></div>
<div class="r" style="left:291.00px;top:565.18px;width:262.80px;height:12.78px;background:#f7f8f9;"></div>
<div class="r" style="left:291.00px;top:590.74px;width:262.80px;height:12.78px;background:#f7f8f9;"></div>
<div class="t " style="left:583.50px;top:452.40px;font-size:12.20px;color:#08707a;font-weight:bold;transform:scaleX(0.890);transform-origin:left center;">Top Sources</div>
<div class="r" style="left:581.20px;top:465.90px;width:263.80px;height:1.30px;background:#5f6266;"></div>
<div class="t " style="left:583.50px;top:479.35px;font-size:7.30px;color:#111;font-weight:bold;transform:scaleX(0.920);transform-origin:left center;">Source</div>
<div class="t " style="right:236.80px;top:479.35px;font-size:7.30px;color:#111;font-weight:bold;transform:scaleX(0.930);transform-origin:right center;"># Leads</div>
<div class="t " style="right:181.80px;top:479.35px;font-size:7.30px;color:#111;font-weight:bold;transform:scaleX(0.900);transform-origin:right center;">Revenue</div>
<div class="r" style="left:581.20px;top:488.50px;width:263.80px;height:12.78px;background:#f7f8f9;"></div>
<div class="t " style="left:583.50px;top:492.40px;font-size:7.20px;color:#8a3c68;font-weight:normal;transform:scaleX(0.985);transform-origin:left center;-webkit-text-stroke:0.15px currentColor;">Offline Events</div>
<div class="t " style="right:236.80px;top:492.40px;font-size:7.20px;color:#212529;font-weight:normal;transform:scaleX(0.960);transform-origin:right center;-webkit-text-stroke:0.15px currentColor;">10</div>
<div class="t " style="right:181.80px;top:492.40px;font-size:7.20px;color:#212529;font-weight:normal;transform:scaleX(0.960);transform-origin:right center;-webkit-text-stroke:0.15px currentColor;">13,200,000,000</div>
<div class="t " style="left:583.50px;top:505.40px;font-size:7.20px;color:#8a3c68;font-weight:normal;transform:scaleX(0.985);transform-origin:left center;-webkit-text-stroke:0.15px currentColor;">Google</div>
<div class="t " style="right:236.80px;top:505.40px;font-size:7.20px;color:#212529;font-weight:normal;transform:scaleX(0.960);transform-origin:right center;-webkit-text-stroke:0.15px currentColor;">30</div>
<div class="t " style="right:181.80px;top:505.40px;font-size:7.20px;color:#212529;font-weight:normal;transform:scaleX(0.960);transform-origin:right center;-webkit-text-stroke:0.15px currentColor;">4,840,761,776</div>
<div class="r" style="left:581.20px;top:514.06px;width:263.80px;height:12.78px;background:#f7f8f9;"></div>
<div class="r" style="left:581.20px;top:539.62px;width:263.80px;height:12.78px;background:#f7f8f9;"></div>
<div class="r" style="left:581.20px;top:565.18px;width:263.80px;height:12.78px;background:#f7f8f9;"></div>
<div class="r" style="left:581.20px;top:590.74px;width:263.80px;height:12.78px;background:#f7f8f9;"></div>
<div class="r" style="left:111px;top:508px;width:905px;height:8px;background:#f1f1f1"></div>
<div class="r" style="left:1016px;top:508px;width:8px;height:8px;background:#f4f4f4"></div>
</body></html>
